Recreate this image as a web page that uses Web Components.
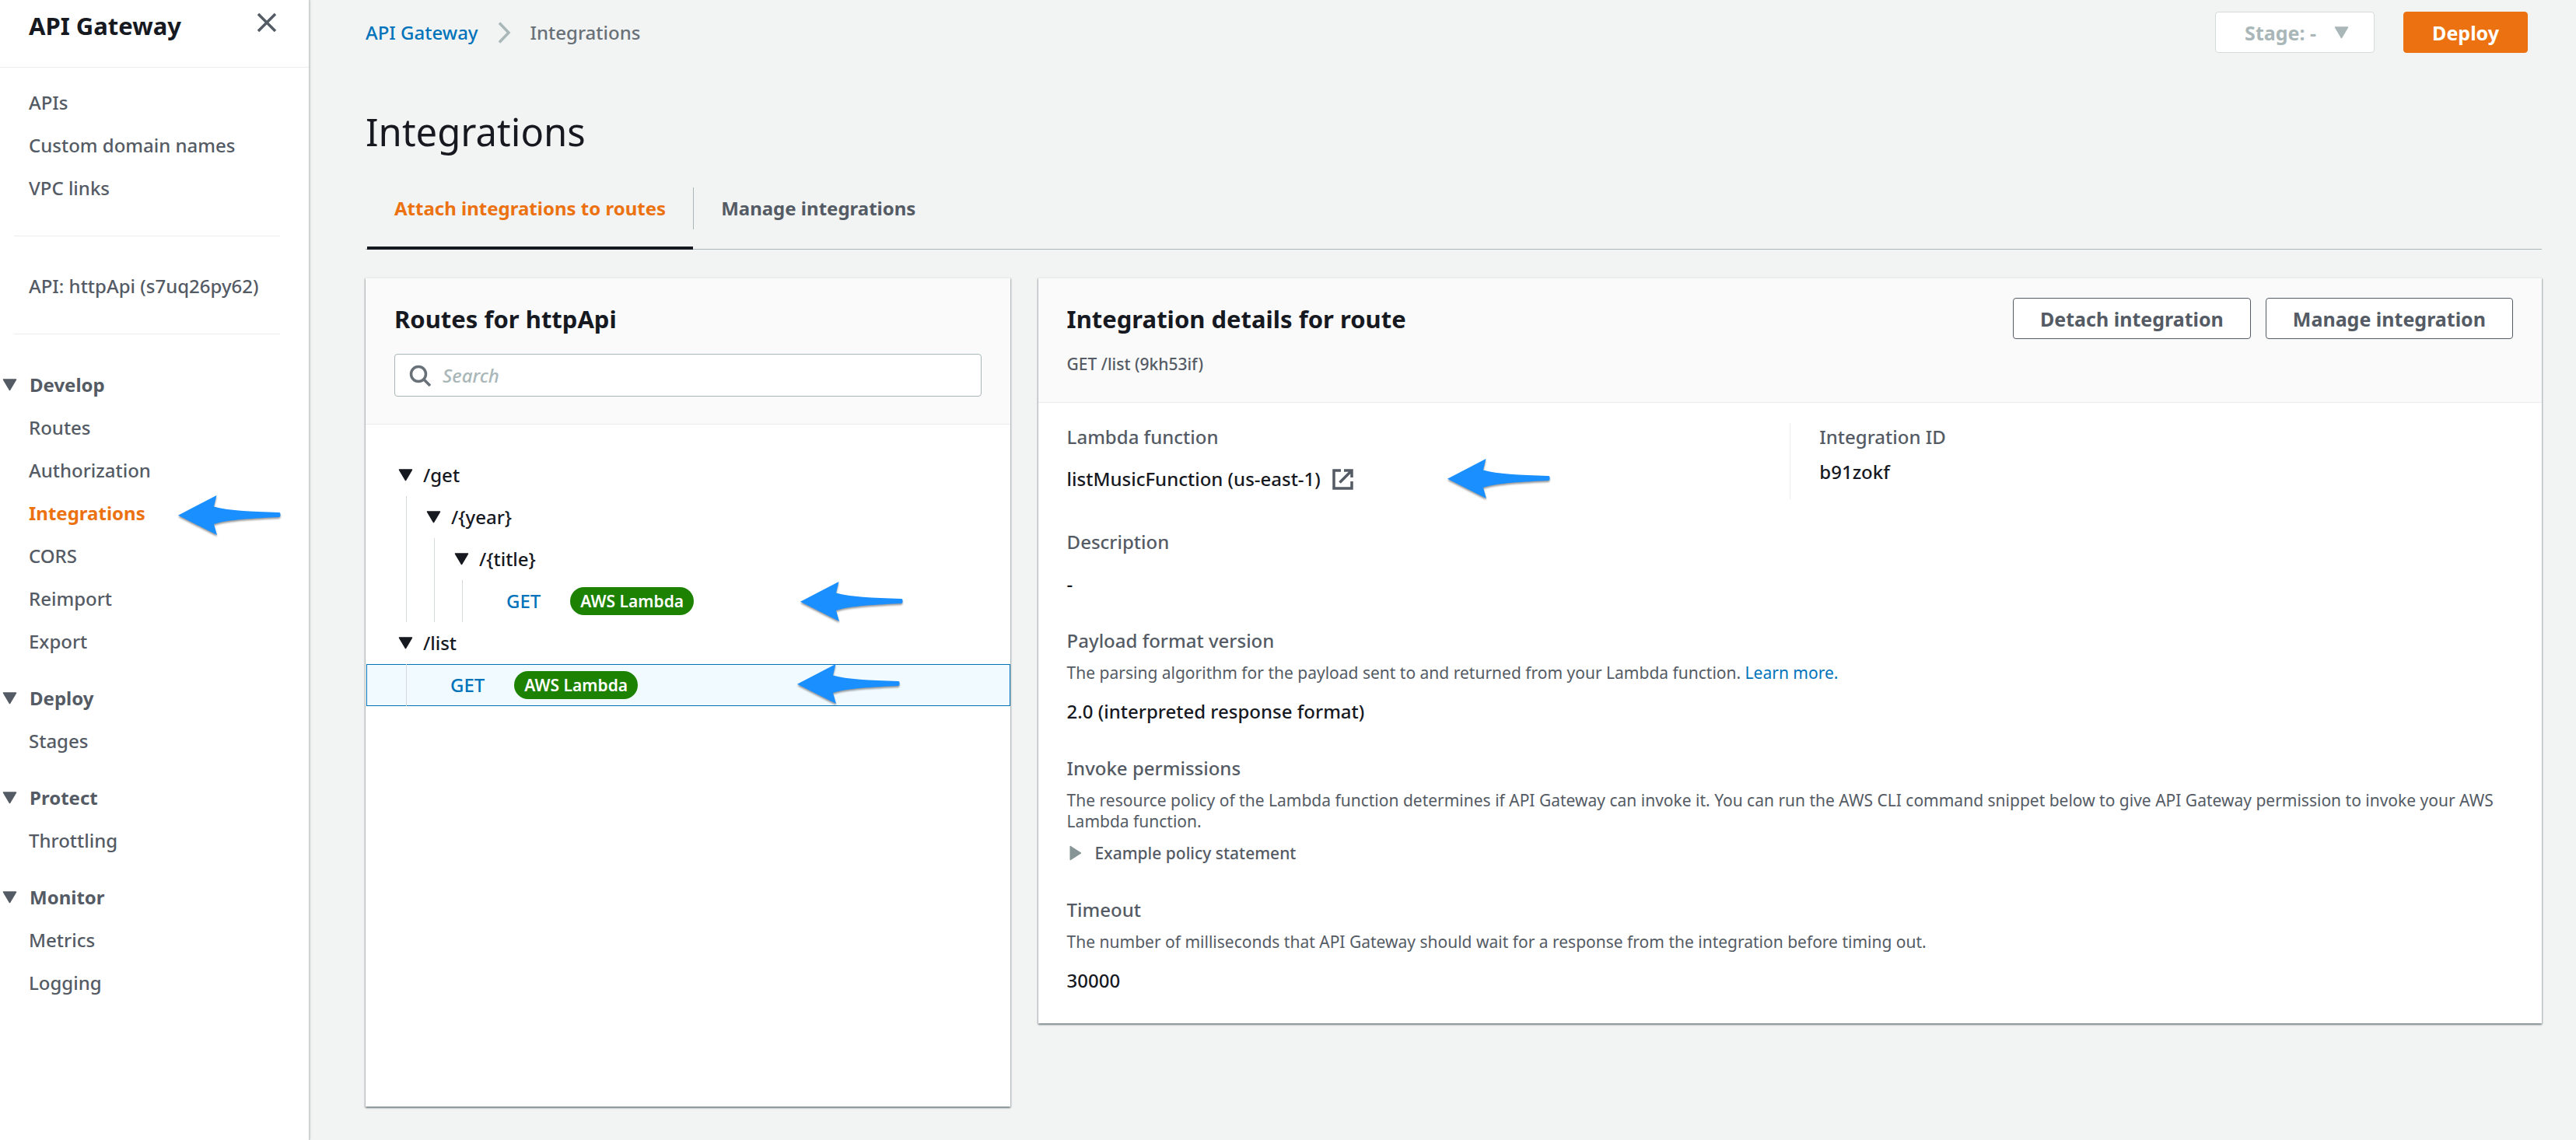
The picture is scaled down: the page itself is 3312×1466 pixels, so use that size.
<!DOCTYPE html>
<html lang="en">
<head>
<meta charset="utf-8">
<title>API Gateway - Integrations</title>
<style>
  html { background: #f2f3f3; }
  body { margin: 0; font: 500 24px/36px "Noto Sans", "Open Sans", sans-serif; color: #16191f; }
</style>
</head>
<body>
<gw-app></gw-app>

<script>
const CARET_DOWN = '<svg class="caret" width="19" height="16" viewBox="0 0 19 16" aria-hidden="true"><path d="M1.5 1h16L9.500 14.500z" fill="currentColor" stroke="currentColor" stroke-width="1.500" stroke-linejoin="round"/></svg>';

function define(name, html) {
  const template = document.createElement('template');
  template.innerHTML = html;
  customElements.define(name, class extends HTMLElement {
    constructor() {
      super();
      this.attachShadow({ mode: 'open' }).append(template.content.cloneNode(true));
    }
  });
}

/* Callout arrow that lies over its host row */
define('gw-arrow', `
<style>
  :host { display: block; width: 133px; height: 52px; pointer-events: none; }
  svg { display: block; overflow: visible; filter: drop-shadow(0 2px 1px rgba(0,0,0,.4)); }
</style>
<svg width="133" height="52" viewBox="0 0 133 52" aria-hidden="true">
  <path fill="#1a8fff" d="M0 25.700 49.500 0 46 14.500C64 19.500 92 21 129 22a2 2 0 0 1 2.500 2v2a2 2 0 0 1-2 2C100 29.500 63 31 46 37L50 51z"/>
</svg>`);

define('gw-nav-item', `
<style>
  :host { display: block; }
  a { display: flex; align-items: center; height: 55px; padding-left: 37px; color: #545b64; text-decoration: none; }
  :host([current]) a { color: #ec7211; font-weight: 700; }
</style>
<a href="#"><slot></slot></a>`);

define('gw-nav-section', `
<style>
  :host { display: block; margin: 1px 0 17px; padding-top: 1px; }
  button { display: flex; align-items: center; gap: 16px; height: 55px; padding: 0 0 0 3px; border: 0; background: none; font: inherit; font-weight: 700; color: #545b64; }
</style>
<button aria-expanded="true">${CARET_DOWN}<slot name="title"></slot></button>
<slot></slot>`);

define('gw-sidebar', `
<style>
  :host { display: block; box-sizing: border-box; background: #fff; border-right: 1px solid #c6caca; box-shadow: 1px 0 2px rgba(0,28,36,.15); }
  header { display: flex; justify-content: space-between; align-items: flex-start; height: 73px; padding: 13px 41px 0 37px; border-bottom: 1px solid #eaeded; }
  h2 { margin: 0; font-size: 31px; line-height: 40px; font-weight: 700; }
  header button { display: flex; margin-top: 3px; padding: 0; border: 0; background: none; color: #545b64; }
  nav { padding-top: 17px; }
  hr { height: 1px; margin: 34px 37px 36px 18px; border: 0; background: #eaeded; }
  .pointed { position: relative; }
  gw-arrow { position: absolute; left: 229px; top: 5px; }
</style>
<header>
  <h2>API Gateway</h2>
  <button aria-label="Close navigation"><svg width="26" height="26" viewBox="0 0 26 26"><path d="M2 2 24 24M24 2 2 24" stroke="currentColor" stroke-width="3.500" fill="none"/></svg></button>
</header>
<nav>
  <gw-nav-item>APIs</gw-nav-item>
  <gw-nav-item>Custom domain names</gw-nav-item>
  <gw-nav-item>VPC links</gw-nav-item>
  <hr>
  <gw-nav-item>API: httpApi (s7uq26py62)</gw-nav-item>
  <hr>
  <gw-nav-section><span slot="title">Develop</span>
    <gw-nav-item>Routes</gw-nav-item>
    <gw-nav-item>Authorization</gw-nav-item>
    <div class="pointed"><gw-nav-item current>Integrations</gw-nav-item><gw-arrow></gw-arrow></div>
    <gw-nav-item>CORS</gw-nav-item>
    <gw-nav-item>Reimport</gw-nav-item>
    <gw-nav-item>Export</gw-nav-item>
  </gw-nav-section>
  <gw-nav-section><span slot="title">Deploy</span>
    <gw-nav-item>Stages</gw-nav-item>
  </gw-nav-section>
  <gw-nav-section><span slot="title">Protect</span>
    <gw-nav-item>Throttling</gw-nav-item>
  </gw-nav-section>
  <gw-nav-section><span slot="title">Monitor</span>
    <gw-nav-item>Metrics</gw-nav-item>
    <gw-nav-item>Logging</gw-nav-item>
  </gw-nav-section>
</nav>`);

define('gw-button', `
<style>
  :host { display: block; }
  button { display: block; box-sizing: border-box; height: 53px; padding: 0 34px; border: 1px solid #545b64; border-radius: 4px; background: #fff; color: #545b64; font: inherit; font-size: 25px; font-weight: 700; white-space: nowrap; }
  :host([primary]) button { padding: 0 36px; border-color: #ec7211; background: #ec7211; color: #fff; }
</style>
<button><slot></slot></button>`);

define('gw-stage-picker', `
<style>
  :host { display: grid; align-items: center; color: #aab7b8; }
  select { grid-area: 1 / 1; appearance: none; box-sizing: border-box; height: 53px; padding: 0 74px 0 37px; border: 1px solid #d5dbdb; border-radius: 4px; background: #fff; color: inherit; opacity: 1; font: inherit; font-size: 25px; font-weight: 700; }
  svg { grid-area: 1 / 1; justify-self: end; margin-right: 33px; }
</style>
<select aria-label="Stage" disabled><option>Stage: -</option></select>${CARET_DOWN}`);

define('gw-topbar', `
<style>
  :host { display: flex; justify-content: space-between; align-items: center; padding: 15px 18px 0 0; }
  nav, .actions { display: flex; align-items: center; }
  .actions { gap: 37px; }
  nav { gap: 25px; color: #687078; }
  a { color: #0073bb; text-decoration: none; }
</style>
<nav aria-label="Breadcrumb">
  <a href="#">API Gateway</a>
  <svg width="17" height="28" viewBox="0 0 17 28" aria-hidden="true"><path d="M2 1.500 14 14 2 26.500" fill="none" stroke="#aab7b8" stroke-width="3.500"/></svg>
  <span>Integrations</span>
</nav>
<div class="actions">
  <gw-stage-picker></gw-stage-picker>
  <gw-button primary>Deploy</gw-button>
</div>`);

define('gw-tabs', `
<style>
  :host { display: flex; border-bottom: 1px solid #aab7b8; }
  button { box-sizing: border-box; height: 80px; margin: 0 0 -1px 0; padding: 0 35px 22px; border: 0; border-bottom: 4px solid transparent; background: none; color: #545b64; font: inherit; font-weight: 700; }
  button[aria-selected="true"] { margin-left: 2px; color: #ec7211; border-bottom-color: #16191f; }
  i { width: 1px; height: 54px; background: #aab7b8; }
</style>
<button role="tab" aria-selected="true">Attach integrations to routes</button>
<i></i>
<button role="tab" aria-selected="false">Manage integrations</button>`);

define('gw-card', `
<style>
  :host { display: block; background: #fff; border-top: 1px solid #eaeded; box-shadow: 0 2px 2px rgba(0,28,36,.35), 1px 1px 2px rgba(0,28,36,.2), -1px 1px 2px rgba(0,28,36,.2); }
  header { padding: 25px 37px 35px; background: #fafafa; border-bottom: 1px solid #eaeded; }
  .head { display: flex; justify-content: space-between; align-items: center; min-height: 53px; margin-bottom: 19px; }
  .actions { display: flex; gap: 19px; }
  ::slotted(h2) { margin: 0; font-size: 31px; line-height: 40px; font-weight: 700; }
</style>
<header>
  <div class="head"><slot name="title"></slot><div class="actions"><slot name="actions"></slot></div></div>
  <slot name="sub"></slot>
</header>
<slot></slot>`);

define('gw-search', `
<style>
  :host { display: flex; align-items: center; box-sizing: border-box; height: 55px; padding: 0 18px; gap: 15px; border: 1px solid #aab7b8; border-radius: 4px; background: #fff; }
  input { flex: 1; min-width: 0; height: 50px; padding: 0; border: 0; outline: 0; background: none; font: inherit; color: #16191f; }
  input::placeholder { color: #aab7b8; font-style: italic; opacity: 1; }
</style>
<svg width="28" height="28" viewBox="0 0 28 28" aria-hidden="true"><g fill="none" stroke="#687078" stroke-width="3.500"><circle cx="12" cy="12" r="9.500"/><path d="M18.500 18.500 27 27"/></g></svg>
<input type="search" placeholder="Search" aria-label="Search routes">`);

define('gw-route', `
<style>
  :host { display: block; }
  button { display: flex; align-items: center; gap: 13px; height: 54px; padding: 0 0 0 5px; border: 0; background: none; color: inherit; font: inherit; }
  .children { margin-left: 15px; padding-left: 20px; border-left: 1px solid #d5dbdb; }
</style>
<button aria-expanded="true">${CARET_DOWN}<slot name="path"></slot></button>
<div class="children"><slot></slot></div>`);

define('gw-method', `
<style>
  :host { position: relative; display: flex; align-items: center; gap: 38px; height: 54px; padding-left: 36px; }
  :host([selected])::before { content: ""; position: absolute; z-index: -1; inset: 0 -37px 0 -72px; border: 1px solid #0073bb; background: #f1faff; }
  a { color: #0073bb; text-decoration: none; }
  .badge { padding: 0 13px; border-radius: 18px; background: #1d8102; color: #fff; font-size: 21px; line-height: 36px; font-weight: 600; }
  gw-arrow { position: absolute; right: 100px; top: 2px; }
  :host([selected]) gw-arrow { right: 104px; top: 0; }
</style>
<a href="#"><slot></slot></a>
<span class="badge">AWS Lambda</span>
<gw-arrow></gw-arrow>`);

define('gw-route-tree', `
<style>
  :host { display: block; isolation: isolate; padding: 38px 37px 0; }
</style>
<gw-route><span slot="path">/get</span>
  <gw-route><span slot="path">/{year}</span>
    <gw-route><span slot="path">/{title}</span>
      <gw-method>GET</gw-method>
    </gw-route>
  </gw-route>
</gw-route>
<gw-route><span slot="path">/list</span>
  <gw-method selected>GET</gw-method>
</gw-route>`);

define('gw-field', `
<style>
  :host { display: block; }
  .label { color: #545b64; }
  ::slotted([slot="hint"]) { margin: 10px 0 0; font-size: 21px; line-height: 27px; font-weight: 400; color: #545b64; }
  .value { margin-top: 18px; }
  :host([tight]) .value { margin-top: 9px; }
</style>
<div class="label"><slot name="label"></slot></div>
<slot name="hint"></slot>
<div class="value"><slot></slot></div>`);

define('gw-details', `
<style>
  :host { display: flex; flex-direction: column; gap: 37px; padding: 26px 37px 37px; }
  .columns { display: grid; grid-template-columns: 1fr 1fr; }
  .columns gw-field { position: relative; padding-bottom: 8px; }
  .columns gw-field + gw-field { padding-left: 37px; border-left: 1px solid #eaeded; }
  .fn { display: flex; align-items: center; gap: 15px; }
  gw-arrow { position: absolute; left: 489px; top: 46px; }
  a { color: #0073bb; text-decoration: none; }
  summary { display: flex; align-items: center; gap: 17px; padding-left: 3px; font-size: 21px; color: #545b64; list-style: none; }
</style>
<div class="columns">
  <gw-field><span slot="label">Lambda function</span>
    <span class="fn">listMusicFunction (us-east-1)
      <svg width="27" height="27" viewBox="0 0 27 27" aria-hidden="true"><g fill="none" stroke="#545b64" stroke-width="3.500"><path d="M11 2H2v23h23v-9M15 2h10v9M24 3 9.500 17.500"/></g></svg>
    </span>
    <gw-arrow></gw-arrow>
  </gw-field>
  <gw-field tight><span slot="label">Integration ID</span>b91zokf</gw-field>
</div>
<gw-field><span slot="label">Description</span>-</gw-field>
<gw-field><span slot="label">Payload format version</span>
  <p slot="hint">The parsing algorithm for the payload sent to and returned from your Lambda function. <a href="#">Learn more.</a></p>
  2.0 (interpreted response format)
</gw-field>
<gw-field tight><span slot="label">Invoke permissions</span>
  <p slot="hint">The resource policy of the Lambda function determines if API Gateway can invoke it. You can run the AWS CLI command snippet below to give API Gateway permission to invoke your AWS Lambda function.</p>
  <details><summary><svg width="16" height="20" viewBox="0 0 16 20" aria-hidden="true"><path d="M1 1v18L15 10z" fill="#879596" stroke="#879596" stroke-linejoin="round"/></svg>Example policy statement</summary></details>
</gw-field>
<gw-field><span slot="label">Timeout</span>
  <p slot="hint">The number of milliseconds that API Gateway should wait for a response from the integration before timing out.</p>
  30000
</gw-field>`);

define('gw-app', `
<style>
  :host { display: grid; grid-template-columns: 398px 1fr; min-height: 100vh; }
  main { padding: 0 44px 43px 72px; }
  h1 { margin: 71px 0 42px; font-size: 49px; line-height: 60px; font-weight: 400; }
  .cards { display: grid; grid-template-columns: 3fr 7fr; gap: 36px; align-items: start; margin-top: 36px; }
  .routes { box-sizing: border-box; min-height: calc(100vh - 400px); }
  .sub { font-size: 21px; line-height: 27px; color: #545b64; }
</style>
<gw-sidebar></gw-sidebar>
<main>
  <gw-topbar></gw-topbar>
  <h1>Integrations</h1>
  <gw-tabs></gw-tabs>
  <div class="cards">
    <gw-card class="routes">
      <h2 slot="title">Routes for httpApi</h2>
      <gw-search slot="sub"></gw-search>
      <gw-route-tree></gw-route-tree>
    </gw-card>
    <gw-card>
      <h2 slot="title">Integration details for route</h2>
      <gw-button slot="actions">Detach integration</gw-button>
      <gw-button slot="actions">Manage integration</gw-button>
      <div slot="sub" class="sub">GET /list (9kh53if)</div>
      <gw-details></gw-details>
    </gw-card>
  </div>
</main>`);
</script>
</body>
</html>
